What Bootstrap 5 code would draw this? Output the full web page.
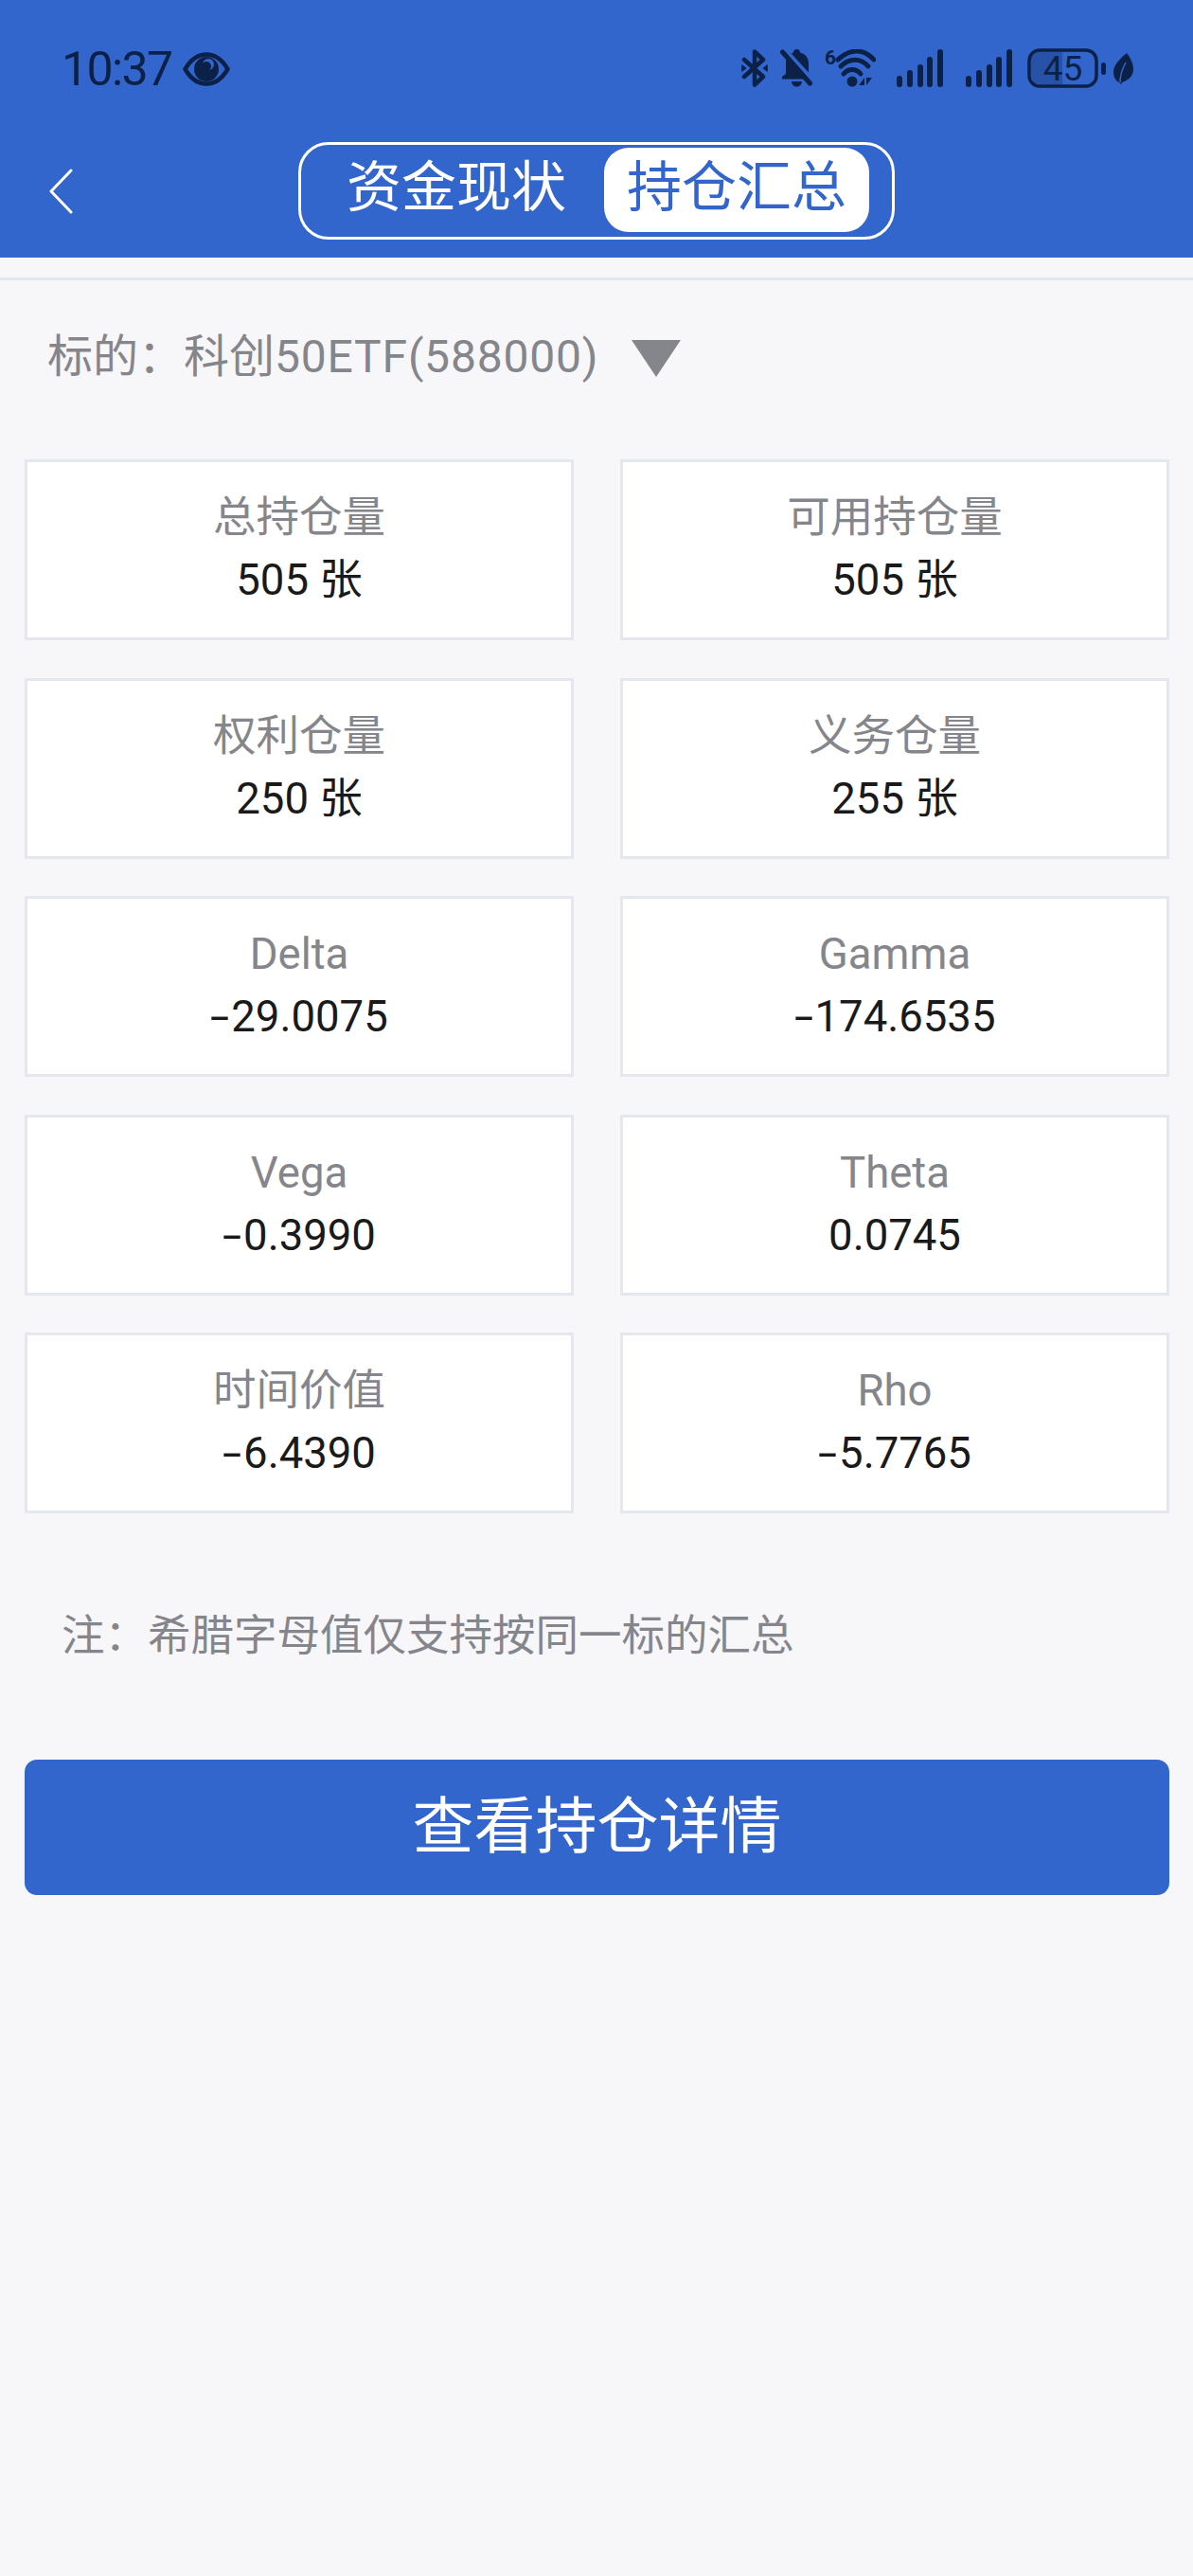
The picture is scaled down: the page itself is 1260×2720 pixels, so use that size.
<!DOCTYPE html>
<html lang="zh-CN">
<head>
<meta charset="utf-8">
<link href="https://cdn.jsdelivr.net/npm/bootstrap@5.3.0/dist/css/bootstrap.min.css" rel="stylesheet">
<style>
body{background:#f7f7fa;font-family:Roboto,"Noto Sans CJK SC",sans-serif;font-weight:400;color:#1a1a1a}
.app-head{background:#3366cc;height:272px}
.status-row{height:150px;padding:0 63px 0 65px;color:#0c2148}
.clock{font-size:50px;line-height:1;letter-spacing:-1.6px;margin-top:-5px}
.status-row svg{display:block;flex:none}
.nav-row{height:122px;display:grid;grid-template-columns:1fr auto 1fr;padding-bottom:19px}
.back-link{padding-left:52px;display:flex;align-items:center;color:#fff}
.seg-box{width:630px;height:103px;border:3px solid #fff;border-radius:32px;padding:3px 24px 5px 48px;font-size:58px;line-height:1}
.seg-on,.seg-off{height:89px;padding-bottom:6px}
.seg-off{color:#fff;width:270px;padding-left:0}
.seg-on{width:280px;background:#fff;color:#3366cc;border-radius:26px;margin-left:auto}
.band{height:24px;border-bottom:3px solid #e5e7ee}
.picker{padding:50px 43px 0 50px;height:189px;font-size:48px;line-height:62px;color:#85858c;align-items:flex-start}
.picker-code{letter-spacing:.8px}
.picker svg{margin:13px 0 0 35px;flex:none}
.stat-grid{--bs-gutter-x:49px;--bs-gutter-y:39.5px;margin-top:calc(var(--bs-gutter-y)*-1)}
.page-pad{padding:0 25px 0 26px}
.stat-box{height:191px;border:3px solid #e5e7ee;border-radius:0;padding-top:26px;background:#fff}
.stat-name{font-size:45.5px;line-height:66px;color:#85858c}
.stat-num{font-size:45.5px;line-height:66px;color:#1a1a1a}
.neg-mark{display:inline-block;width:22px;text-align:left;transform-origin:0 50%;transform:scaleX(1.6)}
.footnote{font-size:45.5px;line-height:60px;color:#85858c;padding:100px 0 0 39px;height:260px}
.main-btn{height:143px;background:#3366cc;border:0;border-radius:13px;color:#fff;font-size:65px;line-height:1}
.main-btn:hover{background:#3366cc;color:#fff}
</style>
</head>
<body>
<header class="app-head">
  <div class="status-row d-flex align-items-center justify-content-between">
    <div class="d-flex align-items-center" style="gap:11px">
      <span class="clock">10:37</span>
      <svg width="50" height="36" viewBox="0 0 50 36" style="margin-top:-5px"><path d="M2.5 18C9 7 16 2.5 25 2.5S41 7 47.500 18C41 29 34 33.500 25 33.500S9 29 2.500 18Z" fill="none" stroke="#0c2148" stroke-width="4.500" stroke-linejoin="round"/><circle cx="25" cy="18" r="13" fill="#0c2148"/><circle cx="27" cy="13" r="6" fill="#3366cc"/><circle cx="25" cy="15" r="5" fill="#0c2148"/></svg>
    </div>
    <div class="d-flex align-items-center" style="margin-top:-6px">
      <svg width="28" height="40" viewBox="0 0 28 40" fill="none" stroke="#0c2148" stroke-width="4.500" stroke-linejoin="round" stroke-linecap="round"><path d="M3 11 23 29 14 37.500V2.500L23 11 3 29"/><path d="M1 17 5 20 1 23Z M27 17 23 20 27 23Z" fill="#0c2148" stroke-width="1"/></svg>
      <svg width="34" height="40" viewBox="0 0 34 40" style="margin-left:13px"><path d="M14 3.500a3.500 3.500 0 0 1 7 0c6 1.500 9 6 9 12V26l3 5.500H2V29l4-3V12C7 8 10 4.500 14 3.500Z" fill="#0c2148"/><path d="M12 34h11a5.500 5.500 0 0 1-11 0Z" fill="#0c2148"/><path d="M4 -1 34 32" stroke="#3366cc" stroke-width="4"/><path d="M2.500 3 31.500 36" stroke="#0c2148" stroke-width="5" stroke-linecap="round"/></svg>
      <svg width="54" height="40" viewBox="0 0 54 40" fill="none" stroke="#0c2148" stroke-linecap="round" style="margin-left:13px"><text x="0" y="16" font-family="Roboto,sans-serif" font-size="21" font-weight="700" fill="#0c2148" stroke="none">6</text><path d="M14 11C27 -1 41 -1 52 11" stroke-width="5"/><path d="M17 18C26 9 38 9 46 18" stroke-width="5"/><path d="M20 26C25 20 33 20 38 26" stroke-width="5"/><circle cx="29" cy="34" r="5.500" fill="#0c2148" stroke="none"/><path d="M42 30v8h-6ZM44 30v8l6-8Z" fill="#0c2148" stroke="none"/></svg>
      <svg width="49" height="40" viewBox="0 0 49 40" fill="#0c2148" style="margin-left:22px"><rect x="0" y="28" width="6" height="12" rx="3"/><rect x="11" y="22" width="6" height="18" rx="3"/><rect x="22" y="16" width="6" height="24" rx="3"/><rect x="32" y="8" width="6" height="32" rx="3"/><rect x="43" y="0" width="6" height="40" rx="3"/></svg>
      <svg width="49" height="40" viewBox="0 0 49 40" fill="#0c2148" style="margin-left:24px"><rect x="0" y="28" width="6" height="12" rx="3"/><rect x="11" y="22" width="6" height="18" rx="3"/><rect x="22" y="16" width="6" height="24" rx="3"/><rect x="32" y="8" width="6" height="32" rx="3"/><rect x="43" y="0" width="6" height="40" rx="3"/></svg>
      <svg width="83" height="42" viewBox="0 0 83 42" style="margin-left:16px"><rect x="2" y="2" width="71" height="38" rx="11" fill="none" stroke="#0c2148" stroke-width="3.500"/><path d="M13 4h24v34H13a9 9 0 0 1-9-9V13a9 9 0 0 1 9-9Z" fill="#0c2148" opacity=".28"/><text x="37.500" y="34" text-anchor="middle" font-family="Roboto,sans-serif" font-size="37" fill="#0c2148">45</text><rect x="78" y="15" width="5" height="13" rx="2.500" fill="#0c2148"/></svg>
      <svg width="21" height="33" viewBox="0 0 21 33" style="margin-left:8px"><path d="M14 0C17 4 21 10 21 17 21 25 15 29 9 31L8 33 6 31C2 29 0 25 0 20 0 12 8 5 14 0Z" fill="#0c2148"/><path d="M7 31C7 23 9 17 13 10" stroke="#3366cc" stroke-width="1.500" fill="none"/></svg>
    </div>
  </div>
  <nav class="nav-row">
    <a class="back-link" href="#" aria-label="返回"><svg width="25" height="48" viewBox="0 0 25 48" fill="none" stroke="#fff" stroke-width="3" stroke-linecap="round" stroke-linejoin="round"><path d="M23 2 2 24 23 46"/></svg></a>
    <div class="seg-box d-flex align-items-center">
      <div class="seg-off d-flex align-items-center">资金现状</div>
      <div class="seg-on d-flex align-items-center justify-content-center">持仓汇总</div>
    </div>
    <div></div>
  </nav>
</header>
<div class="band"></div>
<main>
  <div class="picker d-flex"><span>标的：科创<span class="picker-code">50ETF(588000)</span></span><svg width="52" height="39" viewBox="0 0 52 39"><path d="M0 0H52L26 39Z" fill="#85858c"/></svg></div>
  <div class="page-pad">
    <div class="row row-cols-2 stat-grid">
      <div class="col"><div class="card stat-box text-center"><div class="stat-name">总持仓量</div><div class="stat-num">505 张</div></div></div>
      <div class="col"><div class="card stat-box text-center"><div class="stat-name">可用持仓量</div><div class="stat-num">505 张</div></div></div>
      <div class="col"><div class="card stat-box text-center"><div class="stat-name">权利仓量</div><div class="stat-num">250 张</div></div></div>
      <div class="col"><div class="card stat-box text-center"><div class="stat-name">义务仓量</div><div class="stat-num">255 张</div></div></div>
      <div class="col"><div class="card stat-box text-center"><div class="stat-name">Delta</div><div class="stat-num"><span class="neg-mark">-</span>29.0075</div></div></div>
      <div class="col"><div class="card stat-box text-center"><div class="stat-name">Gamma</div><div class="stat-num"><span class="neg-mark">-</span>174.6535</div></div></div>
      <div class="col"><div class="card stat-box text-center"><div class="stat-name">Vega</div><div class="stat-num"><span class="neg-mark">-</span>0.3990</div></div></div>
      <div class="col"><div class="card stat-box text-center"><div class="stat-name">Theta</div><div class="stat-num">0.0745</div></div></div>
      <div class="col"><div class="card stat-box text-center"><div class="stat-name">时间价值</div><div class="stat-num"><span class="neg-mark">-</span>6.4390</div></div></div>
      <div class="col"><div class="card stat-box text-center"><div class="stat-name">Rho</div><div class="stat-num"><span class="neg-mark">-</span>5.7765</div></div></div>
    </div>
    <div class="footnote">注：希腊字母值仅支持按同一标的汇总</div>
    <button type="button" class="btn main-btn w-100 d-flex align-items-center justify-content-center">查看持仓详情</button>
  </div>
</main>
<script src="https://cdn.jsdelivr.net/npm/bootstrap@5.3.0/dist/js/bootstrap.bundle.min.js"></script>
</body>
</html>
